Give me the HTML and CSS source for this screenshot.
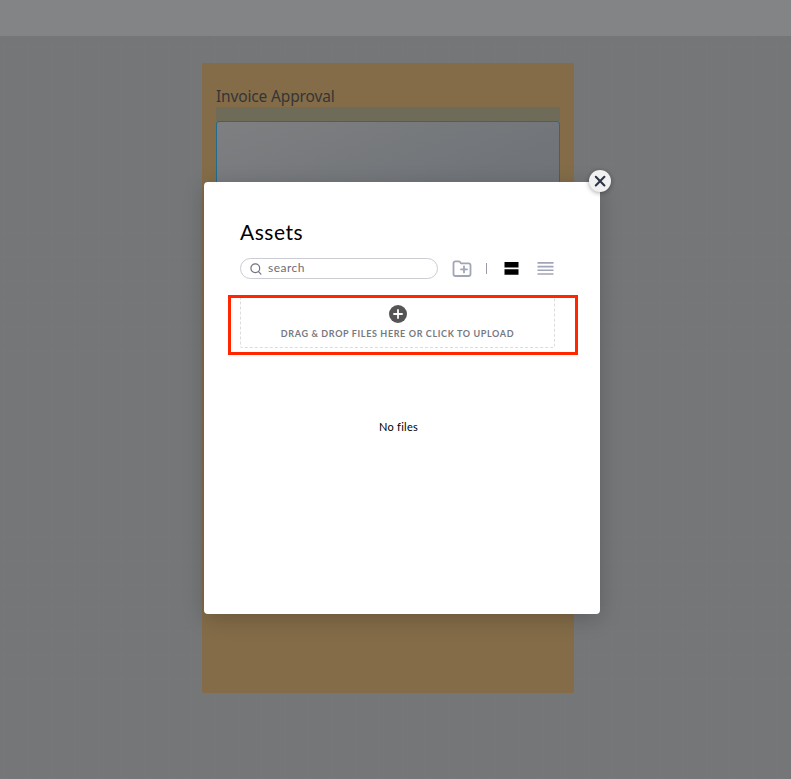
FILE: index.html
```html
<!DOCTYPE html>
<html lang="en">
<head>
<meta charset="utf-8">
<title>Assets</title>
<link rel="stylesheet" href="styles.css">
</head>
<body>
<header class="topbar"></header>
<main class="canvas">
  <section class="form-card">
    <h1 class="form-title"><span>Invoice Approval</span></h1>
    <div class="strip"></div>
    <div class="field"></div>
  </section>
</main>
<div class="modal" role="dialog" aria-label="Assets">
  <button class="close" aria-label="Close">
    <svg width="22" height="22" viewBox="0 0 22 22" fill="none" stroke="#2d3545" stroke-width="2.1" stroke-linecap="round"><path d="M6.8 6.8l8.6 8.6M15.4 6.8l-8.6 8.6"/></svg>
  </button>
  <h2 class="title"><span>Assets</span></h2>
  <div class="tools">
    <div class="search">
      <svg width="12" height="12" viewBox="0 0 12 12" fill="none" stroke="#6f7280" stroke-width="1.2" stroke-linecap="round"><circle cx="5.3" cy="5.3" r="4.4"/><path d="M8.5 8.7l2.4 2.4"/></svg>
      <span class="search-text">search</span>
    </div>
    <svg class="folder" width="20" height="18" viewBox="0 0 20 18" fill="none" stroke="#a2a5b5" stroke-width="1.8" stroke-linecap="round" stroke-linejoin="round"><path d="M1.5 3.3q0-2 2-2h3.2q.8 0 1.3.7l.9 1.3h7.6q2 0 2 2v8.7q0 2-2 2h-13q-2 0-2-2z"/><path d="M12 6.4v6M9 9.4h6"/></svg>
    <span class="divider"></span>
    <svg class="cards" width="15" height="13" viewBox="0 0 15 13"><path d="M.5 0h14v5.6H.5zM.5 7.2h14v5.6H.5z"/></svg>
    <svg class="lines" width="17" height="13" viewBox="0 0 17 13" fill="none" stroke="#a2a5b5" stroke-width="1.6"><path d="M.5 .9h16M.5 4.6h16M.5 8.3h16M.5 12h16"/></svg>
  </div>
  <div class="dropzone">
    <svg width="18" height="18" viewBox="0 0 18 18"><circle cx="9" cy="9" r="9" fill="#555"/><path d="M9 4.3v9.4M4.3 9h9.4" stroke="#fff" stroke-width="1.8"/></svg>
    <span class="drop-text">DRAG &amp; DROP FILES HERE OR CLICK TO UPLOAD</span>
  </div>
  <p class="empty"><span>No files</span></p>
  <div class="highlight"></div>
</div>
</body>
</html>
```
FILE: styles.css
```css
* { box-sizing: border-box; }
body {
  margin: 0;
  height: 779px;
  overflow: hidden;
  background: #757678;
  font-family: Lato, sans-serif;
}
.topbar { height: 36px; background: #838486; }
.canvas {
  height: 743px;
  padding: 27px 0 0 202px;
  background-color: #757678;
  background-image:
    linear-gradient(rgba(255,255,255,.008) 1px, transparent 1px),
    linear-gradient(90deg, rgba(255,255,255,.008) 1px, transparent 1px);
  background-size: 23.4px 23.4px;
  background-position: 4px 10px;
}
.form-card {
  width: 372px;
  height: 630px;
  padding: 23px 14px 0;
  background: #846c48;
}
.form-title {
  margin: 0;
  height: 21px;
  font: 400 15.5px/21px "Noto Sans", sans-serif;
  letter-spacing: -.15px;
  color: #343536;
  white-space: nowrap;
}
.strip { height: 14px; background: #6e6c58; }
.field {
  height: 240px;
  border: 1px solid #216b8d;
  border-radius: 3px;
  background: linear-gradient(160deg, #7e7f81 0%, #717579 40%, #6c6f75 100%);
}
.modal {
  position: absolute;
  left: 204px;
  top: 182px;
  width: 396px;
  height: 432px;
  padding: 35px 45px 0 36px;
  border-radius: 4px;
  background: #fff;
  box-shadow: 0 5px 22px rgba(0,0,0,.2);
}
.close {
  position: absolute;
  top: -12px;
  right: -11px;
  width: 22px;
  height: 22px;
  padding: 0;
  border: 0;
  border-radius: 50%;
  background: #f1f1f2;
  box-shadow: 0 1px 5px rgba(0,0,0,.35);
}
.close svg { display: block; }
.title {
  margin: 0;
  font-size: 21px;
  line-height: 30px;
  font-weight: 400;
  letter-spacing: .5px;
}
.tools { display: flex; align-items: center; height: 21px; margin-top: 11px; }
.search {
  display: flex;
  align-items: center;
  gap: 6px;
  width: 198px;
  height: 21px;
  padding-left: 9px;
  border: 1px solid #cbccd4;
  border-radius: 11px;
  color: #6d6e75;
  font-size: 12px;
  line-height: 18px;
}
.search-text { padding-bottom: 2px; letter-spacing: .5px; }
.folder { margin-left: 14px; }
.divider { width: 1px; height: 11px; margin-left: 14px; background: #989ba5; }
.cards { margin-left: 17px; }
.lines { margin-left: 18px; }
.dropzone {
  display: flex;
  flex-direction: column;
  align-items: center;
  height: 53px;
  margin-top: 16px;
  padding-top: 9px;
  border: 1px dashed #dcdcdf;
  border-radius: 2px;
  color: #777981;
  font-size: 9px;
  font-weight: 700;
  line-height: 12px;
}
.drop-text { margin-top: 5px; white-space: nowrap; letter-spacing: .63px; }
.empty { margin: 71px 0 0 2px; text-align: center; font-size: 11px; line-height: 16px; letter-spacing: .25px; }
.highlight {
  position: absolute;
  left: 24px;
  top: 113px;
  width: 350px;
  height: 60px;
  border: 3px solid #ff2600;
}
```
